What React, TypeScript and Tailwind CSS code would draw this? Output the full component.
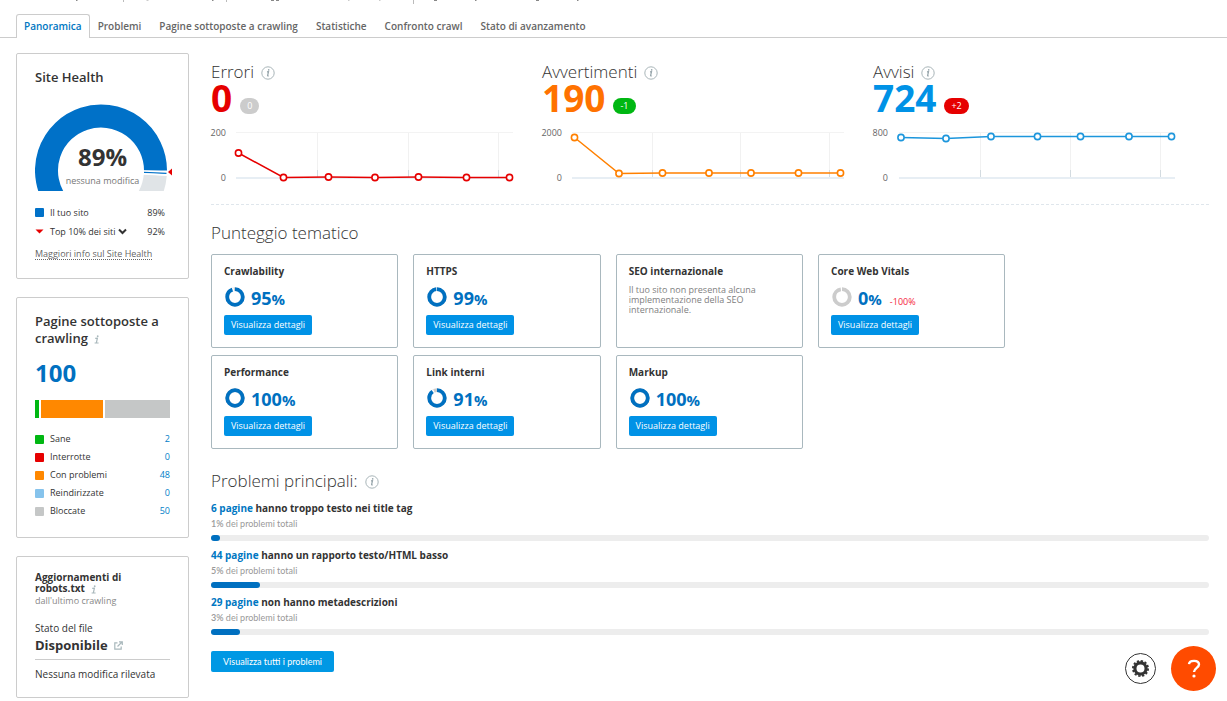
import React from "react";

const tabs = ["Problemi", "Pagine sottoposte a crawling", "Statistiche", "Confronto crawl", "Stato di avanzamento"];

const pages = [
  { label: "Sane", value: 2, color: "bg-[#00b712]" },
  { label: "Interrotte", value: 0, color: "bg-[#e60000]" },
  { label: "Con problemi", value: 48, color: "bg-[#ff8800]" },
  { label: "Reindirizzate", value: 0, color: "bg-[#86c3ec]" },
  { label: "Bloccate", value: 50, color: "bg-[#c5c7c7]" },
];

type Point = [number, number];

type Metric = {
  title: string;
  value: string;
  valueClass: string;
  delta: string;
  deltaClass: string;
  color: string;
  max: string;
  labelEnd: number;
  axis: [number, number];
  grid: number[];
  points: Point[];
};

const metrics: Metric[] = [
  {
    title: "Errori",
    value: "0",
    valueClass: "text-[#e60000]",
    delta: "0",
    deltaClass: "bg-[#cccccc]",
    color: "#e60000",
    max: "200",
    labelEnd: 15,
    axis: [25, 302],
    grid: [106.5, 197.5, 287.5],
    points: [[27.5, 28], [72.5, 52.5], [117.5, 52], [164, 52.5], [207.5, 52], [255.5, 52.5], [298.5, 52.5]],
  },
  {
    title: "Avvertimenti",
    value: "190",
    valueClass: "text-[#ff7200]",
    delta: "-1",
    deltaClass: "bg-[#00b712]",
    color: "#ff8000",
    max: "2000",
    labelEnd: 20,
    axis: [30, 302],
    grid: [110.5, 198.5, 287.5],
    points: [[32.5, 12.5], [77, 48.5], [120.5, 48], [167, 48], [209, 48], [256.5, 48], [298.5, 48]],
  },
  {
    title: "Avvisi",
    value: "724",
    valueClass: "text-[#0092e6]",
    delta: "+2",
    deltaClass: "bg-[#e60000]",
    color: "#1c96dc",
    max: "800",
    labelEnd: 15,
    axis: [26, 302],
    grid: [107.5, 197.5, 287.5],
    points: [[28, 12.5], [73, 13.5], [118, 11.5], [164.5, 11.5], [207.5, 11.5], [256, 11.5], [298.5, 11.5]],
  },
];

type Topic = { title: string; score?: number; note?: string; change?: string };

const topics: Topic[] = [
  { title: "Crawlability", score: 95 },
  { title: "HTTPS", score: 99 },
  { title: "SEO internazionale", note: "Il tuo sito non presenta alcuna implementazione della SEO internazionale." },
  { title: "Core Web Vitals", score: 0, change: "-100%" },
  { title: "Performance", score: 100 },
  { title: "Link interni", score: 91 },
  { title: "Markup", score: 100 },
];

const issues = [
  { count: "6 pagine", text: "hanno troppo testo nei title tag", share: "1%", fill: 0.9 },
  { count: "44 pagine", text: "hanno un rapporto testo/HTML basso", share: "5%", fill: 4.9 },
  { count: "29 pagine", text: "non hanno metadescrizioni", share: "3%", fill: 2.9 },
];

function InfoCircle() {
  return (
    <svg width="14" height="14" viewBox="0 0 14 14" className="mt-px shrink-0" aria-hidden="true">
      <circle cx="7" cy="7" r="6.2" fill="none" stroke="#a9b5b9" strokeWidth="1" />
      <path d="M6 5.8 L7.5 5.6 L6.6 9.6 Q6.6 10.2 7.7 9.7" fill="none" stroke="#93a2a8" strokeWidth="1.2" />
      <circle cx="7.7" cy="3.9" r="0.8" fill="#93a2a8" />
    </svg>
  );
}

function InfoMark() {
  return (
    <svg width="6" height="9" viewBox="0 0 6 9" className="ml-1.5 inline-block" aria-hidden="true">
      <path d="M1.2 3.4 L3.4 3.2 L2.4 7.6 M0.6 8 L4.6 8" fill="none" stroke="#a9b8bc" strokeWidth="1.2" />
      <circle cx="3.7" cy="1.2" r="0.9" fill="#a9b8bc" />
    </svg>
  );
}

function Gauge() {
  return (
    <svg width="138" height="87" viewBox="0 0 138 87" className="block" aria-hidden="true">
      <path d="M120.3 71 A54.5 54.5 0 0 1 110 98.7" fill="none" stroke="#e0e4e7" strokeWidth="23" />
      <path d="M22 98.7 A54.5 54.5 0 1 1 120.5 66.5" fill="none" stroke="#0071c8" strokeWidth="23" />
      <path d="M108 67 L132 68" stroke="#ffffff" strokeWidth="1.6" />
      <path d="M109 68.4 L131.5 69.4" stroke="#0071c8" strokeWidth="1.3" />
      <path d="M108 70 L132 71" stroke="#ffffff" strokeWidth="1.6" />
      <path d="M133 68 L137 64.5 L137 71.5 Z" fill="#e60000" />
    </svg>
  );
}

function LineChart({ m }: { m: Metric }) {
  return (
    <svg width="310" height="60" viewBox="0 0 310 60" className="mt-[11px] block max-w-full overflow-visible">
      <g fill="#666666" fontSize="9" textAnchor="end">
        <text x={m.labelEnd} y="11">{m.max}</text>
        <text x={m.labelEnd} y="56">0</text>
      </g>
      <path d={`M${m.axis[0]} 7.5 H${m.axis[1]}`} stroke="#f3f3f3" />
      {m.grid.map((x) => (
        <g key={x}>
          <path d={`M${x} 8 V52`} stroke="#f1f1f1" />
          <path d={`M${x} 45 V52`} stroke="#d3dbe0" />
        </g>
      ))}
      <path d={`M${m.axis[0]} 53 H${m.axis[1]}`} stroke="#dfe8f0" strokeWidth="1.5" />
      <polyline points={m.points.map((p) => p.join(",")).join(" ")} fill="none" stroke={m.color} strokeWidth="1.5" />
      {m.points.map(([x, y]) => (
        <circle key={x} cx={x} cy={y} r="3.1" fill="#ffffff" stroke={m.color} strokeWidth="1.6" />
      ))}
    </svg>
  );
}

function Donut({ score }: { score: number }) {
  const len = 2 * Math.PI * 7.8;
  const track = score === 0 ? 0.97 : 1;
  return (
    <svg width="20" height="20" viewBox="0 0 20 20" className="ml-px -rotate-90" aria-hidden="true">
      <circle cx="10" cy="10" r="7.8" fill="none" stroke="#cccccc" strokeWidth="3.8" strokeDasharray={`${len * track} ${len}`} />
      {score > 0 && score < 100 && (
        <circle cx="10" cy="10" r="7.8" fill="none" stroke="#ffffff" strokeWidth="4" strokeDasharray={`${(len * (score + 2)) / 100} ${len}`} />
      )}
      {score > 0 && (
        <circle cx="10" cy="10" r="7.8" fill="none" stroke="#0070c0" strokeWidth="3.8" strokeDasharray={`${(len * (score === 100 ? 100 : score - 1)) / 100} ${len}`} />
      )}
    </svg>
  );
}

function TopicCard({ topic }: { topic: Topic }) {
  return (
    <article className="h-[94px] rounded-[2px] border border-[#a9b8be] px-3 pt-2">
      <h3 className="text-[10px] leading-4 font-bold">{topic.title}</h3>
      {topic.note && <p className="mt-1.5 text-[9px] leading-[10px] text-[#808080]">{topic.note}</p>}
      {topic.score !== undefined && (
        <>
          <div className="flex h-9 items-center gap-1.5">
            <Donut score={topic.score} />
            <p className="flex items-baseline pt-0.5 text-[18px] leading-6 font-bold text-[#0070c0]">
              {topic.score}
              <span className="text-[15px] leading-none">%</span>
              {topic.change && <span className="ml-2 text-[9px] leading-none font-normal text-[#f5243b]">{topic.change}</span>}
            </p>
          </div>
          <button type="button" className="block h-5 w-[88px] rounded-[2px] bg-[#0092e6] text-[9px] leading-5 text-white">
            Visualizza dettagli
          </button>
        </>
      )}
    </article>
  );
}

const panel = "rounded-[2px] border border-[#cccccc] px-[18px]";
const heading = "flex items-center gap-[7px] text-[17px] leading-[22px] font-light text-[#333333]";

export default function App() {
  return (
    <div className="bg-white font-['Open_Sans',sans-serif] text-[#333333]">
      <svg width="640" height="4" viewBox="0 0 640 4" className="block max-w-full" aria-hidden="true">
        <path d="M123.5 0 V2 M226.5 0 V2 M413.5 0 V4" stroke="#bbbbbb" />
        <path d="M76 .5 h1.5 M212 .5 h1.5 M271 .5 h3 M276 .5 h3 M434 .5 h3 M475 .5 h1.5 M536 .5 h3 M577 .5 h1.5" stroke="#888888" />
        <path d="M146.5 .5 h2 M348 .5 h1.5 M379 .5 h1.5" stroke="#cccccc" />
      </svg>

      <nav className="mt-2.5 flex h-6 items-end border-b border-[#cccccc] pl-4 text-[10px] font-semibold text-[#666666]">
        <a href="#panoramica" className="-mb-px h-6 rounded-t-[3px] border border-b-0 border-[#cccccc] bg-white px-[7px] leading-[22px] text-[#0077c2]">
          Panoramica
        </a>
        <div className="flex gap-[18px] pl-2 leading-[21px]">
          {tabs.map((t) => (
            <a key={t} href="#sezione">{t}</a>
          ))}
        </div>
      </nav>

      <div className="flex gap-[22px] px-4 pt-[15px]">
        <aside className="flex w-[173px] shrink-0 flex-col gap-[18px]">
          <section className={`${panel} pt-[14px] pb-[18px]`}>
            <h2 className="text-[13px] leading-[18px] font-semibold">Site Health</h2>
            <div className="relative mt-[18px]">
              <Gauge />
              <div className="absolute inset-x-0 bottom-0 text-center">
                <p className="mb-1 text-[24px] leading-7 font-bold">89%</p>
                <p className="pb-1 text-[9px] leading-3 text-[#777777]">nessuna modifica</p>
              </div>
            </div>
            <div className="mt-3 pr-[5px] text-[9px] leading-[19px]">
              <div className="flex items-center">
                <span className="mr-1.5 size-[9px] rounded-[1px] bg-[#0071c8]" />
                <span className="flex-1">Il tuo sito</span>
                <span>89%</span>
              </div>
              <div className="flex items-center">
                <svg width="9" height="5" viewBox="0 0 9 5" className="mr-1.5" aria-hidden="true">
                  <path d="M.5 .5 H8.5 L4.5 4.5 Z" fill="#e60000" />
                </svg>
                <button type="button" className="flex flex-1 items-center gap-0.5">
                  Top 10% dei siti
                  <svg width="9" height="7" viewBox="0 0 9 7" aria-hidden="true">
                    <path d="M1 1.5 L4.5 5 L8 1.5" fill="none" stroke="#333333" strokeWidth="2" />
                  </svg>
                </button>
                <span>92%</span>
              </div>
            </div>
            <p className="mt-[7px] flex">
              <a href="#info" className="border-b border-dotted border-[#666666] text-[9px] leading-[11px] whitespace-nowrap text-[#666666]">
                Maggiori info sul Site Health
              </a>
            </p>
          </section>

          <section className={`${panel} pt-[15px] pb-[17px]`}>
            <h2 className="text-[13px] leading-[17px] font-semibold">
              Pagine sottoposte a crawling
              <InfoMark />
            </h2>
            <p className="mt-[11px] text-[24px] leading-[30px] font-bold text-[#0070c0]">100</p>
            <div className="mt-3 flex h-[18px] gap-0.5">
              <span className="w-1 bg-[#00b712]" />
              <span className="grow-[48] bg-[#ff8800]" />
              <span className="grow-[50] bg-[#c5c7c7]" />
            </div>
            <ul className="mt-3 text-[9px] leading-[18px]">
              {pages.map((p) => (
                <li key={p.label} className="flex items-center gap-1.5">
                  <span className={`size-[9px] rounded-[1px] ${p.color}`} />
                  <span className="flex-1">{p.label}</span>
                  <a href="#pagine" className="text-[#0080c8]">{p.value}</a>
                </li>
              ))}
            </ul>
          </section>

          <section className={`${panel} pt-[15px] pb-[15px]`}>
            <h2 className="w-24 text-[10px] leading-[11px] font-bold">
              Aggiornamenti di robots.txt
              <InfoMark />
            </h2>
            <p className="mt-px text-[9px] leading-3 text-[#888888]">dall'ultimo crawling</p>
            <p className="mt-[14px] text-[10px] leading-[14px]">Stato del file</p>
            <p className="mt-px flex items-center gap-1.5 text-[13px] leading-[18px] font-bold">
              Disponibile
              <svg width="9" height="9" viewBox="0 0 9 9" fill="none" stroke="#a9b8bc" strokeWidth="1.2" aria-hidden="true">
                <path d="M3.5 1.8 H.8 V8.2 H7.2 V5.5 M5 .8 H8.3 V4 M8 1 L3.5 5.5" />
              </svg>
            </p>
            <hr className="mt-[5px] border-[#cccccc]" />
            <p className="mt-1.5 text-[10px] leading-4">Nessuna modifica rilevata</p>
          </section>
        </aside>

        <main className="min-w-0 flex-1 pt-2 pr-0.5">
          <div className="grid grid-cols-3 pr-[5px]">
            {metrics.map((m) => (
              <section key={m.title}>
                <h2 className={heading}>
                  {m.title}
                  <InfoCircle />
                </h2>
                <div className="flex items-end gap-2">
                  <p className={`mb-0.5 text-[37px] leading-[29px] font-bold ${m.valueClass}`}>{m.value}</p>
                  <span className={`h-4 rounded-full px-[7px] text-[9px] leading-4 text-white ${m.deltaClass}`}>{m.delta}</span>
                </div>
                <LineChart m={m} />
              </section>
            ))}
          </div>

          <hr className="mt-[19px] border-dashed border-[#dfe6ec]" />

          <h2 className={`${heading} mt-[17px]`}>Punteggio tematico</h2>
          <div className="mt-2.5 grid w-4/5 grid-cols-4 gap-x-[15px] gap-y-[7px] pr-1">
            {topics.map((t) => (
              <TopicCard key={t.title} topic={t} />
            ))}
          </div>

          <h2 className={`${heading} mt-[21px]`}>
            Problemi principali:
            <InfoCircle />
          </h2>
          <ul className="mt-2 flex flex-col gap-1.5">
            {issues.map((i) => (
              <li key={i.count}>
                <p className="text-[10px] leading-4 font-bold">
                  <a href="#problema" className="text-[#0077c2]">{i.count}</a> {i.text}
                </p>
                <p className="font-['Lato',sans-serif] text-[9px] leading-4 text-[#999999]">
                  <span className="font-semibold">{i.share}</span> dei problemi totali
                </p>
                <div className="mt-[3px] h-1.5 rounded-full bg-[#ededed]">
                  <div className="h-full rounded-full bg-[#0070c0]" style={{ width: `${i.fill}%` }} />
                </div>
              </li>
            ))}
          </ul>
          <button type="button" className="mt-4 block h-[21px] w-[123px] rounded-[2px] bg-[#0098e4] font-['Lato',sans-serif] text-[9px] leading-5 text-white">
            Visualizza tutti i problemi
          </button>
        </main>
      </div>

      <div className="fixed right-[11px] bottom-2.5 flex items-center gap-[15px]">
        <button type="button" aria-label="Impostazioni" className="flex size-[31px] items-center justify-center rounded-full border border-[#333333] bg-white">
          <svg width="19" height="19" viewBox="0 0 19 19" fill="none" stroke="#333333" aria-hidden="true">
            <circle cx="9.5" cy="9.5" r="5.6" strokeWidth="3.2" />
            <circle cx="9.5" cy="9.5" r="7.6" strokeWidth="1.8" strokeDasharray="2.3 1.679" />
          </svg>
        </button>
        <button type="button" aria-label="Aiuto" className="flex size-[45px] items-center justify-center rounded-full bg-[#ff4b00]">
          <svg width="14" height="20" viewBox="0 0 14 20" fill="none" stroke="#ffffff" strokeWidth="2.4" aria-hidden="true">
            <path d="M2 5.2 C2.4 0.8 12 .6 12 5.6 C12 8.8 7 9 7 13" />
            <circle cx="7" cy="17" r="1.6" fill="#ffffff" stroke="none" />
          </svg>
        </button>
      </div>
    </div>
  );
}
